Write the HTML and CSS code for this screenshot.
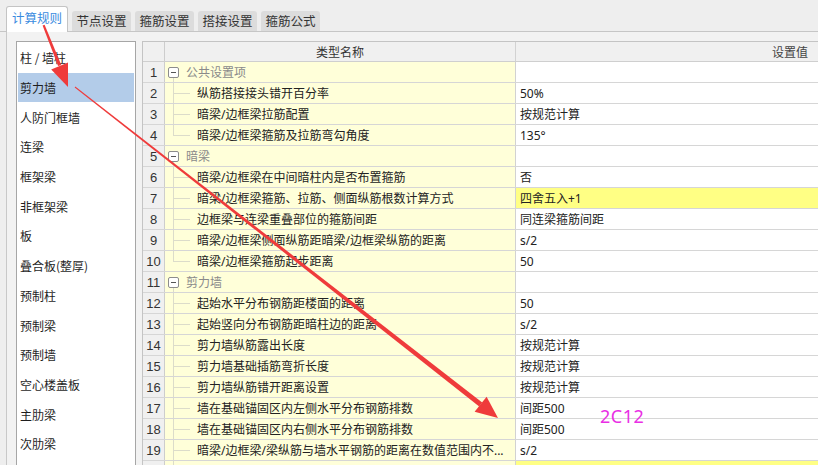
FILE: index.html
```html
<!DOCTYPE html>
<html lang="zh-CN">
<head>
<meta charset="utf-8">
<title>计算规则</title>
<link rel="stylesheet" href="styles.css">
</head>
<body>
<div class="app">
  <div class="tabbar">
    <div class="tab active">计算规则</div>
    <div class="tab">节点设置</div>
    <div class="tab">箍筋设置</div>
    <div class="tab">搭接设置</div>
    <div class="tab">箍筋公式</div>
  </div>
  <div class="content">
    <div class="list">
      <div class="item">柱 / 墙柱</div>
      <div class="item selected">剪力墙</div>
      <div class="item">人防门框墙</div>
      <div class="item">连梁</div>
      <div class="item">框架梁</div>
      <div class="item">非框架梁</div>
      <div class="item">板</div>
      <div class="item">叠合板(整厚)</div>
      <div class="item">预制柱</div>
      <div class="item">预制梁</div>
      <div class="item">预制墙</div>
      <div class="item">空心楼盖板</div>
      <div class="item">主肋梁</div>
      <div class="item">次肋梁</div>
    </div>
    <div class="grid">
      <div class="row head">
        <div class="num"></div>
        <div class="name">类型名称</div>
        <div class="val">设置值</div>
      </div>
      <div class="row group"><div class="num">1</div><div class="name"><span class="box"></span>公共设置项</div><div class="val"></div></div>
      <div class="row child"><div class="num">2</div><div class="name">纵筋搭接接头错开百分率</div><div class="val">50%</div></div>
      <div class="row child"><div class="num">3</div><div class="name">暗梁/边框梁拉筋配置</div><div class="val">按规范计算</div></div>
      <div class="row child last"><div class="num">4</div><div class="name">暗梁/边框梁箍筋及拉筋弯勾角度</div><div class="val">135°</div></div>
      <div class="row group"><div class="num">5</div><div class="name"><span class="box"></span>暗梁</div><div class="val"></div></div>
      <div class="row child"><div class="num">6</div><div class="name">暗梁/边框梁在中间暗柱内是否布置箍筋</div><div class="val">否</div></div>
      <div class="row child"><div class="num">7</div><div class="name">暗梁/边框梁箍筋、拉筋、侧面纵筋根数计算方式</div><div class="val hl">四舍五入+1</div></div>
      <div class="row child"><div class="num">8</div><div class="name">边框梁与连梁重叠部位的箍筋间距</div><div class="val">同连梁箍筋间距</div></div>
      <div class="row child"><div class="num">9</div><div class="name">暗梁/边框梁侧面纵筋距暗梁/边框梁纵筋的距离</div><div class="val">s/2</div></div>
      <div class="row child last"><div class="num">10</div><div class="name">暗梁/边框梁箍筋起步距离</div><div class="val">50</div></div>
      <div class="row group"><div class="num">11</div><div class="name"><span class="box"></span>剪力墙</div><div class="val"></div></div>
      <div class="row child"><div class="num">12</div><div class="name">起始水平分布钢筋距楼面的距离</div><div class="val">50</div></div>
      <div class="row child"><div class="num">13</div><div class="name">起始竖向分布钢筋距暗柱边的距离</div><div class="val">s/2</div></div>
      <div class="row child"><div class="num">14</div><div class="name">剪力墙纵筋露出长度</div><div class="val">按规范计算</div></div>
      <div class="row child"><div class="num">15</div><div class="name">剪力墙基础插筋弯折长度</div><div class="val">按规范计算</div></div>
      <div class="row child"><div class="num">16</div><div class="name">剪力墙纵筋错开距离设置</div><div class="val">按规范计算</div></div>
      <div class="row child"><div class="num">17</div><div class="name">墙在基础锚固区内左侧水平分布钢筋排数</div><div class="val">间距500</div></div>
      <div class="row child"><div class="num">18</div><div class="name">墙在基础锚固区内右侧水平分布钢筋排数</div><div class="val">间距500</div></div>
      <div class="row child"><div class="num">19</div><div class="name">暗梁/边框梁/梁纵筋与墙水平钢筋的距离在数值范围内不...</div><div class="val">s/2</div></div>
      <div class="row child"><div class="num"></div><div class="name"></div><div class="val hl"></div></div>
    </div>
  </div>

  <svg class="arrows" width="818" height="465" viewBox="0 0 818 465">
    <polygon fill="#ef3b3b" points="42.6,25.4 44.6,24.8 61.3,65.1 58.1,66.1"/>
    <polygon fill="#ef3b3b" points="68,87 51.2,69.4 68.0,62.4"/>
    <polygon fill="#ef3b3b" points="75.3,86.6 74.7,87.4 479.2,406.4 482.2,402.4"/>
    <polygon fill="#ef3b3b" points="498,418 474.6,411.8 486.6,396.8"/>
  </svg>
  <div class="note">2C12</div>
</div>
</body>
</html>
```

FILE: styles.css
```css
* { box-sizing: border-box; }
html, body { margin: 0; padding: 0; }
body {
  width: 818px;
  height: 465px;
  overflow: hidden;
  background: #eeeeee;
  font-family: "Noto Sans", "Noto Sans CJK SC", sans-serif;
  font-size: 12px;
  color: #222;
}
.app {
  position: relative;
  width: 818px;
  height: 465px;
  overflow: hidden;
}
.tabbar {
  display: flex;
  align-items: flex-end;
  gap: 4px;
  height: 32px;
  padding-left: 6px;
  border-bottom: 1px solid #c6c6c6;
}
.tab {
  width: 59px;
  height: 20px;
  background: #dcdcdc;
  border-radius: 3px 3px 0 0;
  display: flex;
  align-items: center;
  justify-content: center;
  color: #333;
  font-family: "Noto Sans CJK SC", sans-serif;
  font-size: 12.5px;
  line-height: 1;
}
.tab.active {
  width: 62px;
  height: 26px;
  margin-bottom: -1px;
  background: #ffffff;
  border: 1px solid #c4c4c4;
  border-bottom: none;
  color: #3a8be0;
  padding-bottom: 2px;
}
.content {
  display: flex;
  gap: 6px;
  margin-left: 6px;
  height: 433px;
  border-left: 1px solid #c8c8c8;
  background: #f2f2f2;
  padding: 9px 0 0 9px;
}
.list {
  flex: none;
  width: 120px;
  height: 460px;
  border: 1px solid #a6a6a6;
  background: #ffffff;
  padding: 1px;
}
.item {
  height: 29.7px;
  display: flex;
  align-items: center;
  padding-left: 2px;
  font-family: "Noto Sans CJK SC", sans-serif;
  font-size: 12px;
  color: #1e1e1e;
}
.item.selected { background: #b3cce9; }
.grid {
  flex: none;
  width: 930px;
  border-top: 1px solid #c4c4c4;
  border-left: 1px solid #c4c4c4;
  background: #ffffff;
}
.row {
  display: flex;
  height: 21px;
  border-bottom: 1px solid #d6d6d6;
}
.row.head { height: 20px; border-bottom-color: #cfcfcf; }
.num {
  flex: none;
  width: 22px;
  background: #f0f0f0;
  border-right: 1px solid #cdcdcd;
  display: flex;
  align-items: center;
  justify-content: center;
  font-family: "Liberation Sans", sans-serif;
  font-size: 13px;
  color: #333;
}
.name {
  flex: none;
  width: 351px;
  position: relative;
  background: #ffffd9;
  border-right: 1px solid #d2d2d2;
  display: flex;
  align-items: center;
  white-space: nowrap;
  overflow: hidden;
  padding-left: 32px;
  font-family: "Noto Sans", "Noto Sans CJK SC", sans-serif;
}
.val {
  flex: none;
  width: 548px;
  display: flex;
  align-items: center;
  padding-left: 4px;
  white-space: nowrap;
  font-family: "Noto Sans", "Noto Sans CJK SC", sans-serif;
}
.val.hl { background: #ffff84; }
.head .num, .head .name, .head .val { background: #f0f0f0; }
.head .name { justify-content: center; padding-left: 0; color: #333; }
.head .val { justify-content: center; padding-left: 0; color: #444; }
.head .num { border-right-color: #cdcdcd; }
.group .name { padding-left: 3px; color: #8a8a8a; }
.box {
  position: relative;
  flex: none;
  width: 11px;
  height: 11px;
  border: 1px solid #8c8c8c;
  border-radius: 2px;
  background: #fff;
  margin-right: 7px;
}
.box::after {
  content: "";
  position: absolute;
  left: 2px;
  top: 4px;
  width: 5px;
  height: 1px;
  background: #555;
}
.group .name::after {
  content: "";
  position: absolute;
  left: 8px;
  top: 16px;
  bottom: -1px;
  width: 1px;
  background: #dcdcca;
}
.child .name::before {
  content: "";
  position: absolute;
  left: 8px;
  top: -1px;
  bottom: -1px;
  width: 1px;
  background: #dcdcca;
}
.child.last .name::before { bottom: 10px; }
.child .name::after {
  content: "";
  position: absolute;
  left: 8px;
  top: 10px;
  width: 17px;
  height: 1px;
  background: #dcdcca;
}
.arrows {
  position: absolute;
  left: 0;
  top: 0;
  pointer-events: none;
}
.note {
  position: absolute;
  left: 600px;
  top: 404px;
  font-family: "Noto Sans", sans-serif;
  font-size: 18px;
  letter-spacing: 0.5px;
  color: #e92fe4;
  line-height: 24px;
}
```
